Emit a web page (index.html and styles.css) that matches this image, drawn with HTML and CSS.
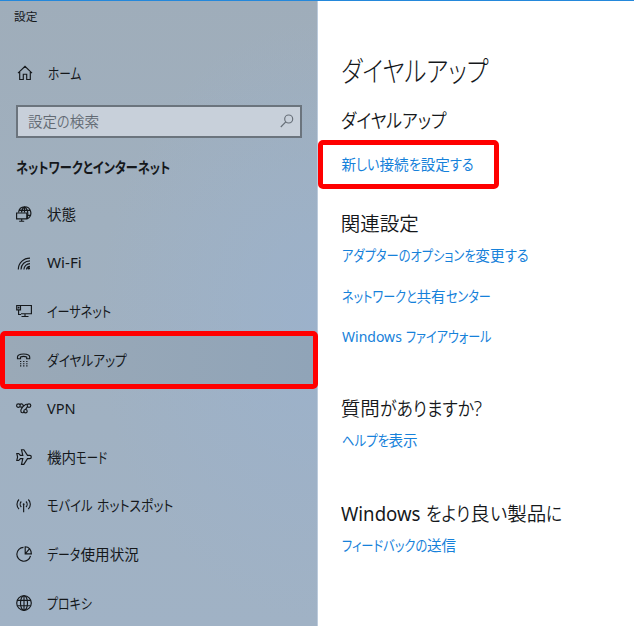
FILE: index.html
```html
<!DOCTYPE html>
<html lang="ja">
<head>
<meta charset="utf-8">
<title>設定</title>
<link rel="stylesheet" href="styles.css">
</head>
<body>
<div class="window">
  <aside class="sidebar">
    <div class="caption">設定</div>
    <a class="item home">
      <svg class="icon" viewBox="0 0 16 16"><path d="M1 8.2 8 1.4l7 6.8M2.7 7v7.5h3.6V9.2h3.4v5.3h3.6V7"/></svg>
      <span class="kana" style="--w:34px;--s:.8">ホーム</span>
    </a>
    <div class="search">
      <span class="placeholder">設定<span class="kana" style="--w:12.6px;--s:.89">の</span>検索</span>
      <svg class="glass" viewBox="0 0 14 14"><circle cx="8.7" cy="5" r="4"/><path d="M5.8 7.9.8 13"/></svg>
    </div>
    <h2 class="group"><span class="kana" style="--w:155px;--s:.835">ネットワークとインターネット</span></h2>
    <nav class="nav">
      <a class="item">
        <svg class="icon" viewBox="0 0 16 16"><path d="M2.5 6.500C3 3 5.500.8 8.500.8a6.300 6.300 0 0 1 2.700 12M3.200 4.300h10.700M8.500.8C6 2.500 5.500 4.500 5.500 6.500M8.500.8c3.500 2.500 3.800 7.500 2.500 12M11 9.300h3.600M8.500.8v5.700"/><path d="M.6 7h10.200v5.800H.6zM5.700 12.800v2.400M3.200 15.200h5"/></svg>
        <span>状態</span>
      </a>
      <a class="item">
        <svg class="icon" viewBox="0 0 16 16"><path d="M2.300 15.500C2.300 9 7.500 4.100 14 4.100M5 15.500c0-5 4-8.700 9-8.700M7.900 15.500c0-3.300 2.800-5.900 6.100-5.900M10.500 15.500c0-1.800 1.500-3.200 3.500-3.200"/><circle class="solid" cx="12.700" cy="14.300" r="1.300"/></svg>
        <span class="kana" style="--w:35px;--s:1.040">Wi-Fi</span>
      </a>
      <a class="item">
        <svg class="icon" viewBox="0 0 16 16"><path d="M4.500 2.500h10.900v8.200H5M9 10.700v2.600M5.500 13.500h7M.7 2.500h3.800v4.400H.7zM2.600 6.900v4.600h2.400"/><path class="solid" d="M1.700 3.700h1.800v1.800H1.700z"/></svg>
        <span class="kana" style="--w:65px;--s:.83">イーサネット</span>
      </a>
      <a class="item current">
        <svg class="icon" viewBox="0 0 16 16"><path d="M1.500 6.700V5.100C1.500.9 13.700.9 13.700 5.100v1.600h-3V5.100c-1.500-.7-4.700-.7-6.200 0v1.600z"/><path class="dots" d="M4 9.500h7.600M4 11.700h7.600M4 13.900h7.600"/></svg>
        <span class="kana" style="--w:80px;--s:.87">ダイヤルアップ</span>
      </a>
      <a class="item">
        <svg class="icon" viewBox="0 0 16 16"><circle cx="2.400" cy="5.600" r="1.800"/><circle cx="13" cy="5.600" r="1.800"/><circle cx="9.500" cy="11.200" r="1.700"/><path d="M3.800 4.500c1.600-1.400 3.600-.5 3.400 1.500-.2 1.700-2.400 2.500-2.400 4.700 0 2.700 3.200 2.600 3.200.5M4 6.800c2.200 1.200 3.500-.3 4.600-1.500 1-1.100 1.800-1.300 2.900-.8M11.500 6.700 9.600 9.400"/></svg>
        <span>VPN</span>
      </a>
      <a class="item">
        <svg class="icon" viewBox="0 0 16 16"><path d="M.8 4.500h1.900l1.700 1.900h2.400L5.500.7h2.300l3.700 5.700h2.300c2 0 2 3.200 0 3.200h-2.300l-3.700 5.700H5.500l1.300-5.700H4.400l-1.700 1.900H.8L1.600 8z"/></svg>
        <span>機内<span class="kana" style="--w:31px;--s:.78">モード</span></span>
      </a>
      <a class="item">
        <svg class="icon" viewBox="0 0 16 16"><path d="M3 2.500c-2.700 2.500-2.700 7 0 9.500M5.300 4.500c-1.500 1.500-1.500 4 0 5.500M12.300 2.500c2.700 2.500 2.700 7 0 9.500M10 4.500c1.500 1.500 1.500 4 0 5.500M7.650 7.500v7.700"/><circle class="solid" cx="7.650" cy="7.200" r=".9"/></svg>
        <span><span class="kana" style="--w:49.5px;--s:.84">モバイル</span><span class="kana" style="--w:77px;--s:.88">ホットスポット</span></span>
      </a>
      <a class="item">
        <svg class="icon" viewBox="0 0 16 16"><path d="M7.500 1.400a6.900 6.900 0 1 0 7 8.400M9.200.7v7.200h6.200C15.400 4 13 .7 9.200.7zM9.200 7.900l4-4.800"/></svg>
        <span><span class="kana" style="--w:33.5px;--s:.81">データ</span>使用状況</span>
      </a>
      <a class="item">
        <svg class="icon" viewBox="0 0 16 16"><circle cx="8" cy="8" r="7.300"/><ellipse cx="8" cy="8" rx="3.500" ry="7.300"/><path d="M1.400 5.300h13.200M1.400 10.700h13.200M8 .7v14.600"/></svg>
        <span class="kana" style="--w:46px;--s:.82">プロキシ</span>
      </a>
    </nav>
  </aside>
  <main class="content">
    <h1 class="title"><span class="kana" style="--w:149px;--s:.82">ダイヤルアップ</span></h1>
    <section class="section dialup">
      <h2 class="heading"><span class="kana" style="--w:106px;--s:.86">ダイヤルアップ</span></h2>
      <a class="link marked">新<span class="kana" style="--w:23.4px;--s:.89">しい</span>接続<span class="kana" style="--w:12px;--s:.89">を</span>設定<span class="kana" style="--w:24px;--s:.9">する</span></a>
    </section>
    <section class="section related">
      <h2 class="heading">関連設定</h2>
      <a class="link"><span class="kana" style="--w:133.8px;--s:.84">アダプターのオプションを</span>変更<span class="kana" style="--w:24px;--s:.9">する</span></a>
      <a class="link"><span class="kana" style="--w:75px;--s:.83">ネットワークと</span>共有<span class="kana" style="--w:45px;--s:.83">センター</span></a>
      <a class="link"><span class="kana" style="--w:64px;--s:.96">Windows</span><span class="kana" style="--w:85px;--s:.83">ファイアウォール</span></a>
    </section>
    <section class="section help">
      <h2 class="heading">質問<span class="kana" style="--w:94px;--s:.865">がありますか</span>?</h2>
      <a class="link"><span class="kana" style="--w:47px;--s:.85">ヘルプを</span>表示</a>
    </section>
    <section class="section feedback">
      <h2 class="heading"><span class="kana latin" style="--w:85.5px;--s:.955">Windows</span><span class="kana" style="--w:44px;--s:.865">をより</span>良<span class="kana" style="--w:17.5px;--s:.93">い</span>製品<span class="kana" style="--w:16px;--s:.86">に</span></h2>
      <a class="link"><span class="kana" style="--w:85.5px;--s:.84">フィードバックの</span>送信</a>
    </section>
  </main>
</div>
</body>
</html>
```
FILE: styles.css
```css
* { box-sizing: border-box; }

body {
  margin: 0;
  background: #fff;
  color: #15181b;
  font: 400 14.6px/20px "Noto Sans", "Noto Sans CJK JP", sans-serif;
  font-feature-settings: "palt";
  white-space: nowrap;
  overflow: hidden;
}

h1, h2 { margin: 0; font-weight: inherit; }

.window {
  display: flex;
  height: 626px;
  border-top: 1px solid #2488db;
}

/* Condensed runs: --w is the advance, --s the horizontal scale */
.kana {
  display: inline-block;
  width: var(--w);
  transform: scaleX(var(--s));
  transform-origin: 0 50%;
}

.latin { font-weight: 400; }

.sidebar {
  width: 318px;
  flex: none;
  border-right: 1px solid #bccbdc;
  background:
    radial-gradient(ellipse 220px 300px at 318px 320px, rgba(154, 178, 207, .7), rgba(154, 178, 207, 0)),
    linear-gradient(180deg, #9fadba 0, #a0b0bf 35%, #a0b2c5 100%);
}

.caption {
  height: 48px;
  padding: 5px 0 0 14px;
  font-size: 11.7px;
}

.item {
  display: flex;
  align-items: center;
  gap: 15px;
  height: 48.6px;
  padding-left: 16px;
}

.home { padding-left: 17px; }

.icon {
  width: 16px;
  height: 16px;
  flex: none;
}

.icon, .glass {
  fill: none;
  stroke: #15181b;
  stroke-width: 1.15;
}

.icon .solid { fill: #15181b; stroke: none; }
.icon .dots { stroke-dasharray: 1.3 1.8; }

.search {
  display: flex;
  align-items: center;
  justify-content: space-between;
  width: 286px;
  height: 33px;
  margin: 7px 0 0 16px;
  padding: 0 6px 1px 10px;
  border: 2px solid #6b747d;
  background: #c8d0da;
  color: #626a73;
  font-weight: 350;
}

.glass { width: 14px; height: 14px; stroke: #666e77; }

.group {
  height: 52px;
  padding: 19px 0 0 16px;
  font-size: 14.6px;
  font-weight: 700;
}

.current {
  width: 318px;
  height: 58px;
  margin: -4.7px 0;
  padding-left: 11px;
  border: 5px solid #f00;
  border-radius: 5px;
  background: linear-gradient(90deg, #9aa9b7, #90a4b8);
}

.content { padding: 51px 0 0 23.5px; }

.title {
  height: 55px;
  margin-left: -1px;
  font-size: 28.6px;
  font-weight: 300;
  line-height: 38px;
}

.heading { margin-left: -.7px; font-size: 19.5px; font-weight: 350; line-height: 28px; }

.section { display: flex; flex-direction: column; align-items: flex-start; }

.link { color: #1681da; }

.dialup { height: 103px; }
.marked {
  width: 181px;
  height: 49px;
  margin: 5px 0 0 -23.5px;
  padding: 9px 0 0 18.5px;
  border: 5px solid #f00;
  border-radius: 5px;
}

.related { height: 185px; }
.related .heading { margin-bottom: 7px; }
.related .link { margin-bottom: 20.5px; }
.help { height: 105px; }
.help .heading, .feedback .heading { margin-bottom: 7px; }
```
